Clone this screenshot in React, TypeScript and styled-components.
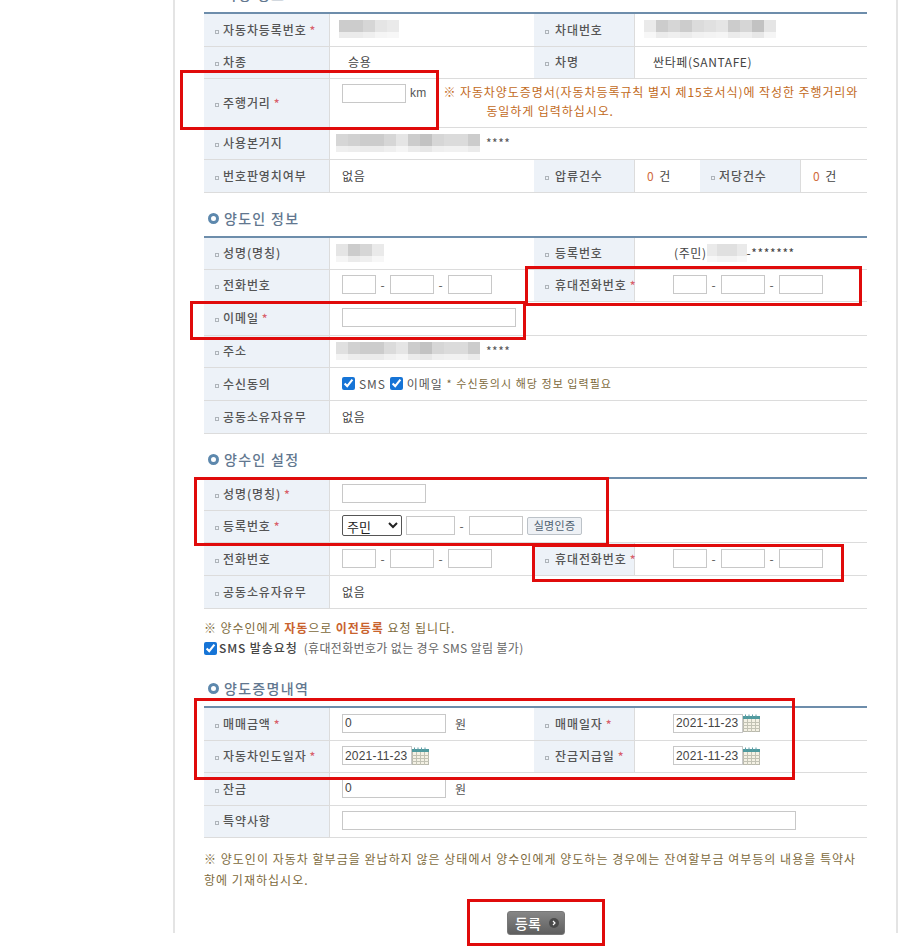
import React from "react";
import styled, { createGlobalStyle } from "styled-components";

const GlobalStyle = createGlobalStyle`
  html, body {
    margin: 0;
    padding: 0;
    background: #fff;
    overflow: hidden;
  }
  body, input, select, button {
    font-family: "Noto Sans CJK KR", "Noto Sans", sans-serif;
  }
`;

const Page = styled.div`
  position: relative;
  width: 905px;
  height: 948px;
  overflow: hidden;
`;

const Frame = styled.div`
  box-sizing: border-box;
  width: 725px;
  height: 948px;
  margin-left: 173px;
  padding-left: 29px;
  border-left: 2px solid #e4e4e4;
  border-right: 2px solid #e4e4e4;
  color: #444;
  font-size: 12px;
`;

const Content = styled.div`
  width: 663px;
  margin-top: -15px;
`;

const SectionTitle = styled.h3<{ $first?: boolean }>`
  display: flex;
  align-items: center;
  gap: 5px;
  height: 18px;
  margin: ${(p) => (p.$first ? "0" : "16px")} 0 9px 4px;
  font-size: 14px;
  font-weight: 500;
  letter-spacing: 1.3px;
  color: #62778f;
`;

const Ring = styled.span`
  box-sizing: border-box;
  width: 11px;
  height: 11px;
  border: 3px solid #5d88ad;
  border-radius: 50%;
`;

const Table = styled.table`
  width: 663px;
  table-layout: fixed;
  border-collapse: separate;
  border-spacing: 0;
  border-top: 2px solid #6d8dab;
`;

const Row = styled.tr<{ $h?: number }>`
  height: ${(p) => p.$h ?? 32}px;
`;

const Label = styled.th`
  box-sizing: border-box;
  padding: 0 0 2px 11px;
  background: #edf2f8;
  border-bottom: 1px solid #dcdcdc;
  border-right: 1px solid #dcdcdc;
  font-size: 12px;
  font-weight: 500;
  letter-spacing: 0.9px;
  text-align: left;
  white-space: nowrap;
  color: #555;
`;

const Bullet = styled.span<{ $right?: boolean }>`
  display: inline-block;
  box-sizing: border-box;
  width: 4px;
  height: 4px;
  margin-right: ${(p) => (p.$right ? 6 : 4)}px;
  vertical-align: 1px;
  border: 1px solid #aeb4ba;
`;

const Star = styled.span`
  margin-left: 3px;
  color: #d8606a;
`;

const Value = styled.td<{ $pad?: number; $top?: boolean }>`
  box-sizing: border-box;
  padding: ${(p) => (p.$top ? "5px 0 0" : "0 0 2px")};
  padding-left: ${(p) => p.$pad ?? 12}px;
  border-bottom: 1px solid #dcdcdc;
  vertical-align: ${(p) => (p.$top ? "top" : "middle")};
  white-space: nowrap;
  letter-spacing: 0.6px;
  color: #444;
`;

const Inline = styled.div`
  display: flex;
  align-items: center;
`;

const TopInline = styled(Inline)`
  align-items: flex-start;
`;

const Input = styled.input<{ $w: number }>`
  box-sizing: border-box;
  width: ${(p) => p.$w}px;
  height: 19px;
  padding: 0 2px;
  border: 1px solid #c8c8c8;
  border-radius: 0;
  outline: none;
  font-family: "Liberation Sans", sans-serif;
  font-size: 12px;
  letter-spacing: 0.2px;
  color: #444;
`;

const Dash = styled.span`
  width: 14px;
  text-align: center;
  color: #555;
`;

const Unit = styled.span<{ $gap?: number }>`
  margin-left: ${(p) => p.$gap ?? 9}px;
  color: #555;
`;

const KmUnit = styled(Unit)`
  line-height: 19px;
  font-family: "Liberation Sans", sans-serif;
  letter-spacing: 0.2px;
`;

const KmNote = styled.div`
  box-sizing: border-box;
  width: 424px;
  margin: -2px 0 0 17px;
  padding-left: 43px;
  text-indent: -43px;
  white-space: normal;
  word-break: keep-all;
  line-height: 19px;
  letter-spacing: 0.92px;
  color: #c26a22;
`;

const Count = styled.span`
  margin-right: 5px;
  color: #d06a3c;
`;

const Mosaic = styled.span<{ $shift?: number }>`
  display: inline-flex;
  margin-left: ${(p) => p.$shift ?? 0}px;
`;

const MosaicCell = styled.span<{ $w?: number }>`
  display: block;
  width: ${(p) => p.$w ?? 12}px;
  height: 18px;
`;

const Masked = styled.span`
  margin-left: 6px;
  letter-spacing: 0.5px;
  color: #555;
`;

const Check = styled.input`
  width: 13px;
  height: 13px;
  margin: 0 4px 0 0;
  accent-color: #1674d6;
`;

const SmsCheck = styled(Check)`
  margin-right: 2px;
`;

const CheckLabel = styled.span`
  margin-right: 4px;
  letter-spacing: 0.9px;
  color: #555;
`;

const Hint = styled.span`
  font-size: 11px;
  letter-spacing: 1.05px;
  color: #7d6a3c;
`;

const Select = styled.select`
  box-sizing: border-box;
  width: 60px;
  height: 21px;
  margin-right: 4px;
  padding: 0;
  border: 1px solid #555;
  border-radius: 2px;
  background: #fff;
  font-size: 13px;
  color: #222;
`;

const VerifyButton = styled.button`
  box-sizing: border-box;
  width: 55px;
  height: 18px;
  margin-left: 4px;
  padding: 0;
  border: 1px solid #bcc2c8;
  border-radius: 2px;
  background: #eef1f5;
  font-size: 11px;
  line-height: 15px;
  letter-spacing: 0.3px;
  color: #4f5f70;
`;

const Notes = styled.div`
  margin: 9px 0 -5px;
  padding-bottom: 10px;
  line-height: 20px;
  letter-spacing: 0.95px;
  color: #7d6a3c;
`;

const Strong = styled.b`
  font-weight: 700;
  color: #c9632e;
`;

const SmsRow = styled(Inline)`
  letter-spacing: 0.35px;
  color: #666;
`;

const SmsTitle = styled.b`
  margin-right: 6px;
  font-weight: 500;
  letter-spacing: 0.9px;
  color: #444;
`;

const FinePrint = styled.p`
  margin: 10px 0 0;
  line-height: 21px;
  letter-spacing: 1.02px;
  color: #7d6a3c;
`;

const Actions = styled.div`
  display: flex;
  justify-content: center;
  margin-top: 21px;
`;

const SubmitButton = styled.button`
  display: flex;
  align-items: center;
  justify-content: center;
  gap: 8px;
  box-sizing: border-box;
  width: 58px;
  height: 24px;
  padding: 0 0 0 3px;
  border: 1px solid #777;
  border-radius: 3px;
  background: linear-gradient(#868686, #5f5f5f);
  font-size: 14px;
  font-weight: 500;
  color: #fff;
`;

const Annotation = styled.div<{ $x: number; $y: number; $w: number; $h: number }>`
  position: absolute;
  box-sizing: border-box;
  left: ${(p) => p.$x}px;
  top: ${(p) => p.$y}px;
  width: ${(p) => p.$w}px;
  height: ${(p) => p.$h}px;
  border: 3px solid #e00b0b;
  pointer-events: none;
`;

const annotations = [
  { x: 180, y: 70, w: 259, h: 60 },
  { x: 525, y: 266, w: 337, h: 40 },
  { x: 190, y: 301, w: 336, h: 39 },
  { x: 194, y: 477, w: 415, h: 69 },
  { x: 532, y: 544, w: 312, h: 38 },
  { x: 194, y: 698, w: 601, h: 82 },
  { x: 467, y: 899, w: 138, h: 47 },
];

const Cols = () => (
  <colgroup>
    <col width={126} />
    <col width={204} />
    <col width={101} />
    <col width={65} />
    <col width={101} />
    <col width={66} />
  </colgroup>
);

const Th = ({
  children,
  star,
  right,
}: {
  children: React.ReactNode;
  star?: boolean;
  right?: boolean;
}) => (
  <Label>
    <Bullet $right={right} />
    {children}
    {star && <Star>*</Star>}
  </Label>
);

// pixelated privacy blur, each hex digit is how dark that cell gets
const BlurBlock = ({ cells, shift, cellW }: { cells: string; shift?: number; cellW?: number }) => (
  <Mosaic $shift={shift}>
    {cells.split("").map((c, i) => {
      const top = 0xf4 - parseInt(c, 16) * 5;
      const bottom = 0xfb - parseInt(c, 16) * 2;
      return (
        <MosaicCell
          key={i}
          $w={cellW}
          style={{
            background: `linear-gradient(rgb(${top},${top},${top}) 12px, rgb(${bottom},${bottom},${bottom}) 12px)`,
          }}
        />
      );
    })}
  </Mosaic>
);

const Phone = ({ first = 34 }: { first?: number }) => (
  <Inline>
    <Input $w={first} />
    <Dash>-</Dash>
    <Input $w={44} />
    <Dash>-</Dash>
    <Input $w={44} />
  </Inline>
);

const CalendarIcon = () => (
  <svg width="17" height="18" viewBox="0 0 17 18">
    <rect x="0.5" y="2.5" width="16" height="15" fill="#f4f1e4" stroke="#b9b9ad" />
    <rect x="0" y="2" width="17" height="3" fill="#4f9a9e" />
    <path d="M2.5 0.5v3M6 0.5v3M9.5 0.5v3M13 0.5v3" stroke="#5f9ea6" />
    <path d="M0 8.5h17M0 11.5h17M0 14.5h17M4.5 5v13M8.5 5v13M12.5 5v13" stroke="#c2c2b4" />
  </svg>
);

const DateField = () => (
  <Inline>
    <Input $w={70} defaultValue="2021-11-23" />
    <CalendarIcon />
  </Inline>
);

export default function App() {
  return (
    <Page>
      <GlobalStyle />
      <Frame>
        <Content>
          <SectionTitle $first>
            <Ring />
            차량 정보
          </SectionTitle>
          <Table>
            <Cols />
            <tbody>
              <Row $h={33}>
                <Th star>자동차등록번호</Th>
                <Value $pad={9}>
                  <Inline>
                    <BlurBlock cells="88632" />
                  </Inline>
                </Value>
                <Th right>차대번호</Th>
                <Value colSpan={3} $pad={9}>
                  <Inline>
                    <BlurBlock cells="286854386a3" />
                  </Inline>
                </Value>
              </Row>
              <Row>
                <Th>차종</Th>
                <Value $pad={18}>승용</Value>
                <Th right>차명</Th>
                <Value colSpan={3} $pad={18}>
                  싼타페(SANTAFE)
                </Value>
              </Row>
              <Row $h={49}>
                <Th star>주행거리</Th>
                <Value colSpan={5} $top>
                  <TopInline>
                    <Input $w={64} />
                    <KmUnit $gap={4}>km</KmUnit>
                    <KmNote>
                      ※ 자동차양도증명서(자동차등록규칙 별지 제15호서식)에 작성한 주행거리와 동일하게 입력하십시오.
                    </KmNote>
                  </TopInline>
                </Value>
              </Row>
              <Row>
                <Th>사용본거지</Th>
                <Value colSpan={5} $pad={6}>
                  <Inline>
                    <BlurBlock cells="6788638a6558" />
                    <Masked>****</Masked>
                  </Inline>
                </Value>
              </Row>
              <Row $h={33}>
                <Th>번호판영치여부</Th>
                <Value>없음</Value>
                <Th right>압류건수</Th>
                <Value>
                  <Count>0</Count>건
                </Value>
                <Th>저당건수</Th>
                <Value>
                  <Count>0</Count>건
                </Value>
              </Row>
            </tbody>
          </Table>

          <SectionTitle>
            <Ring />
            양도인 정보
          </SectionTitle>
          <Table>
            <Cols />
            <tbody>
              <Row>
                <Th>성명(명칭)</Th>
                <Value $pad={6}>
                  <Inline>
                    <BlurBlock cells="3862" />
                  </Inline>
                </Value>
                <Th right>등록번호</Th>
                <Value colSpan={3} $pad={39}>
                  <Inline>
                    (주민)
                    <BlurBlock cells="2442" cellW={10} />
                    -*******
                  </Inline>
                </Value>
              </Row>
              <Row>
                <Th>전화번호</Th>
                <Value>
                  <Phone />
                </Value>
                <Th star right>
                  휴대전화번호
                </Th>
                <Value colSpan={3} $pad={38}>
                  <Phone />
                </Value>
              </Row>
              <Row $h={34}>
                <Th star>이메일</Th>
                <Value colSpan={5}>
                  <Input $w={174} />
                </Value>
              </Row>
              <Row>
                <Th>주소</Th>
                <Value colSpan={5} $pad={6}>
                  <Inline>
                    <BlurBlock cells="4788538a6558" />
                    <Masked>****</Masked>
                  </Inline>
                </Value>
              </Row>
              <Row $h={33}>
                <Th>수신동의</Th>
                <Value colSpan={5}>
                  <Inline>
                    <Check type="checkbox" defaultChecked />
                    <CheckLabel>SMS</CheckLabel>
                    <Check type="checkbox" defaultChecked />
                    <CheckLabel>이메일</CheckLabel>
                    <Hint>* 수신동의시 해당 정보 입력필요</Hint>
                  </Inline>
                </Value>
              </Row>
              <Row $h={33}>
                <Th>공동소유자유무</Th>
                <Value colSpan={5}>없음</Value>
              </Row>
            </tbody>
          </Table>

          <SectionTitle>
            <Ring />
            양수인 설정
          </SectionTitle>
          <Table>
            <Cols />
            <tbody>
              <Row>
                <Th star>성명(명칭)</Th>
                <Value colSpan={5}>
                  <Input $w={84} />
                </Value>
              </Row>
              <Row>
                <Th star>등록번호</Th>
                <Value colSpan={5}>
                  <Inline>
                    <Select defaultValue="주민">
                      <option>주민</option>
                    </Select>
                    <Input $w={49} />
                    <Dash>-</Dash>
                    <Input $w={54} />
                    <VerifyButton type="button">실명인증</VerifyButton>
                  </Inline>
                </Value>
              </Row>
              <Row $h={33}>
                <Th>전화번호</Th>
                <Value>
                  <Phone />
                </Value>
                <Th star right>
                  휴대전화번호
                </Th>
                <Value colSpan={3} $pad={38}>
                  <Phone />
                </Value>
              </Row>
              <Row $h={33}>
                <Th>공동소유자유무</Th>
                <Value colSpan={5}>없음</Value>
              </Row>
            </tbody>
          </Table>
          <Notes>
            <div>
              ※ 양수인에게 <Strong>자동</Strong>으로 <Strong>이전등록</Strong> 요청 됩니다.
            </div>
            <SmsRow>
              <SmsCheck type="checkbox" defaultChecked />
              <SmsTitle>SMS 발송요청</SmsTitle>
              (휴대전화번호가 없는 경우 SMS 알림 불가)
            </SmsRow>
          </Notes>

          <SectionTitle>
            <Ring />
            양도증명내역
          </SectionTitle>
          <Table>
            <Cols />
            <tbody>
              <Row $h={33}>
                <Th star>매매금액</Th>
                <Value>
                  <Inline>
                    <Input $w={104} defaultValue="0" />
                    <Unit>원</Unit>
                  </Inline>
                </Value>
                <Th star right>
                  매매일자
                </Th>
                <Value colSpan={3} $pad={38}>
                  <DateField />
                </Value>
              </Row>
              <Row>
                <Th star>자동차인도일자</Th>
                <Value>
                  <DateField />
                </Value>
                <Th star right>
                  잔금지급일
                </Th>
                <Value colSpan={3} $pad={38}>
                  <DateField />
                </Value>
              </Row>
              <Row $h={33}>
                <Th>잔금</Th>
                <Value colSpan={5}>
                  <Inline>
                    <Input $w={104} defaultValue="0" />
                    <Unit>원</Unit>
                  </Inline>
                </Value>
              </Row>
              <Row>
                <Th>특약사항</Th>
                <Value colSpan={5}>
                  <Input $w={454} />
                </Value>
              </Row>
            </tbody>
          </Table>
          <FinePrint>
            ※ 양도인이 자동차 할부금을 완납하지 않은 상태에서 양수인에게 양도하는 경우에는 잔여할부금 여부등의 내용을 특약사항에 기재하십시오.
          </FinePrint>
          <Actions>
            <SubmitButton type="button">
              등록
              <svg width="10" height="10" viewBox="0 0 10 10">
                <circle cx="5" cy="5" r="5" fill="#4a4a4a" />
                <path d="M4 3l2 2-2 2" fill="none" stroke="#fff" strokeWidth="1.2" />
              </svg>
            </SubmitButton>
          </Actions>
        </Content>
      </Frame>
      {annotations.map((a) => (
        <Annotation key={`${a.x}-${a.y}`} $x={a.x} $y={a.y} $w={a.w} $h={a.h} />
      ))}
    </Page>
  );
}
